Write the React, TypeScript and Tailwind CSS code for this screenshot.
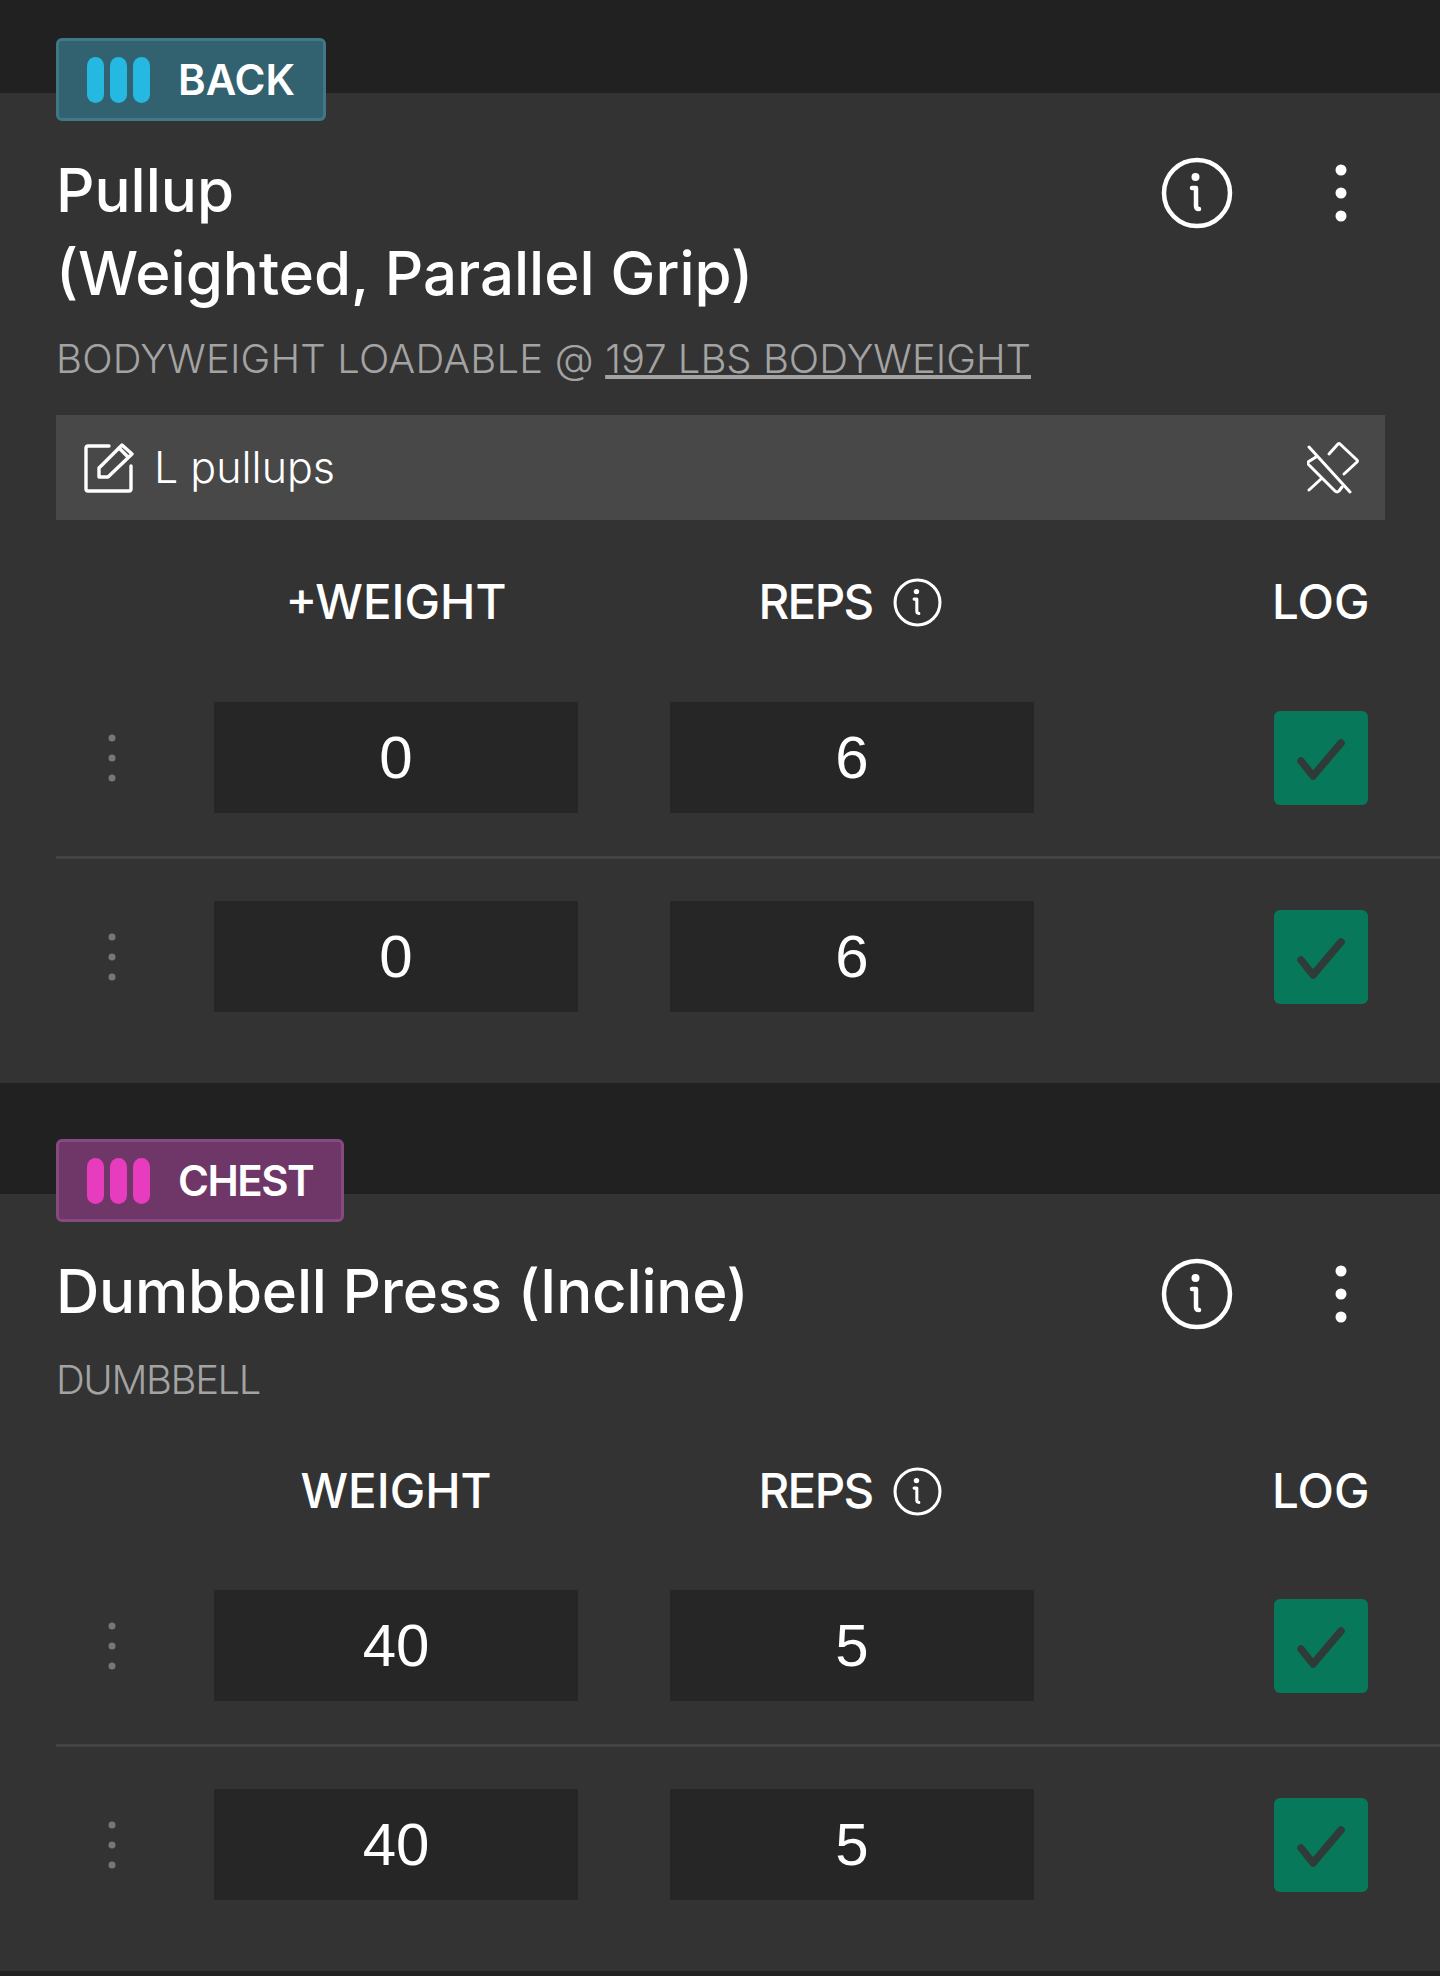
const sans = "font-['Inter','Noto_Sans',sans-serif]";

function InfoIcon({ className }: { className: string }) {
  return (
    <svg viewBox="0 0 72 72" fill="none" stroke="currentColor" className={className}>
      <circle cx="36" cy="36" r="33" strokeWidth="4.5" />
      <circle cx="34.5" cy="20" r="4" fill="currentColor" stroke="none" />
      <path d="M31 31h4v18c0 2 1 3 3 3" strokeWidth="4.5" strokeLinecap="round" strokeLinejoin="round" />
    </svg>
  );
}

function MoreIcon() {
  return (
    <svg viewBox="0 0 12 58" className="h-[58px] w-3 text-white" fill="currentColor">
      <circle cx="6" cy="6" r="5.5" />
      <circle cx="6" cy="29" r="5.5" />
      <circle cx="6" cy="52" r="5.5" />
    </svg>
  );
}

function EditIcon() {
  return (
    <svg viewBox="0 0 50 50" fill="none" stroke="currentColor" strokeWidth="3.4" strokeLinecap="round" strokeLinejoin="round" className="h-[50px] w-[50px] text-white">
      <path d="M25 3H4Q2 3 2 5v41q0 2 2 2h41q2 0 2-2V23" />
      <path d="M15 34V25L38 2l10 9-24 23z" />
      <path d="M35 5l9 9" />
    </svg>
  );
}

function PinOffIcon() {
  return (
    <svg viewBox="0 0 52 52" fill="none" stroke="currentColor" strokeWidth="3" strokeLinecap="round" strokeLinejoin="round" className="h-[52px] w-[52px] text-white">
      <path d="M2 5l41 45" />
      <path d="M22 12l9-10q1-1 2 0l17 16q1 1 0 2L37 32" />
      <path d="M9 15L1 20q-1 1 0 2l27 27q2 2 4 0l3-4" />
      <path d="M14 37L2 48" />
    </svg>
  );
}

function CheckIcon() {
  return (
    <svg viewBox="0 0 94 94" fill="none" stroke="#2f3b38" strokeWidth="7.5" strokeLinecap="round" strokeLinejoin="round" className="h-[94px] w-[94px]">
      <path d="M27 50l12 15 28-33" />
    </svg>
  );
}

function Badge({ label, tone }: { label: string; tone: "back" | "chest" }) {
  const box = tone === "back" ? "border-[#3f7889] bg-[#326270]" : "border-[#874a80] bg-[#6f3767]";
  const bar = tone === "back" ? "bg-[#25b8e0]" : "bg-[#e63cbd]";
  const track = tone === "back" ? "" : "tracking-[-1.5px]";
  return (
    <div className={`relative flex h-[83px] w-fit items-center rounded-md border-[3px] pl-[28px] pr-[28px] ${box}`}>
      <div className="flex gap-1.5">
        <span className={`h-[46px] w-[17px] rounded-full ${bar}`} />
        <span className={`h-[46px] w-[17px] rounded-full ${bar}`} />
        <span className={`h-[46px] w-[17px] rounded-full ${bar}`} />
      </div>
      <span className={`ml-7 text-[42px] font-semibold leading-none text-white ${sans} ${track}`}>{label}</span>
    </div>
  );
}

function SetRow({ left, right }: { left: string; right: string }) {
  return (
    <div className="flex h-[111px] items-center">
      <div className="flex w-[158px] justify-start pl-[52px]">
        <svg viewBox="0 0 8 48" className="h-12 w-2" fill="#777">
          <circle cx="4" cy="4" r="3.5" />
          <circle cx="4" cy="24" r="3.5" />
          <circle cx="4" cy="44" r="3.5" />
        </svg>
      </div>
      <div className="flex h-[111px] w-[364px] items-center justify-center bg-[#262626] font-['Liberation_Sans',sans-serif] text-[60px] text-white">{left}</div>
      <div className="ml-[92px] flex h-[111px] w-[364px] items-center justify-center bg-[#262626] font-['Liberation_Sans',sans-serif] text-[60px] text-white">{right}</div>
      <div className="ml-[240px] h-[94px] w-[94px] rounded-md bg-[#07795a]">
        <CheckIcon />
      </div>
    </div>
  );
}

function Header({ weight }: { weight: string }) {
  return (
    <div className={`flex h-[60px] items-center text-[47.5px] font-medium text-white ${sans}`}>
      <div className="ml-[158px] w-[364px] text-center">{weight}</div>
      <div className="ml-[90px] flex w-[364px] items-center justify-center gap-5">
        <span className="tracking-[-1.6px]">REPS</span>
        <InfoIcon className="h-[49px] w-[49px] text-white" />
      </div>
      <div className="ml-[240px] w-[94px] text-center">LOG</div>
    </div>
  );
}

function CardHead({ lines, sub, titleClass = "" }: { lines: string[]; sub: React.ReactNode; titleClass?: string }) {
  return (
    <>
      <div className="flex items-start justify-between pr-[93px]">
        <h2 className={`text-[60px] font-medium leading-[83px] text-white ${sans} ${titleClass}`}>
          {lines.map((l) => (
            <div key={l}>{l}</div>
          ))}
        </h2>
        <div className="mt-[8px] flex items-center gap-[102px]">
          <InfoIcon className="h-[72px] w-[72px] text-white" />
          <MoreIcon />
        </div>
      </div>
      <div className={`mt-4 text-[40px] font-light leading-[56px] text-[#a3a3a3] ${sans}`}>{sub}</div>
    </>
  );
}

export default function App() {
  return (
    <div className="min-h-[1976px] bg-[#212121]">
      <div className="h-[93px]" />
      <section className="flow-root bg-[#333333] pb-[71px] pl-14">
        <div className="-mt-[55px]">
          <Badge label="BACK" tone="back" />
        </div>
        <div className="mt-[28px]">
          <CardHead
            lines={["Pullup", "(Weighted, Parallel Grip)"]}
            sub={
              <>
                <span className="tracking-[0.18px]">BODYWEIGHT LOADABLE @ </span>
                <span className="underline">197 LBS BODYWEIGHT</span>
              </>
            }
          />
        </div>
        <div className="mt-[28px] mr-[55px] flex h-[105px] items-center justify-between bg-[#484848] pl-7 pr-[26px]">
          <div className={`flex items-center gap-[20px] text-[43px] font-light text-white ${sans}`}>
            <EditIcon />
            L pullups
          </div>
          <PinOffIcon />
        </div>
        <div className="mt-[52px]">
          <Header weight="+WEIGHT" />
        </div>
        <div className="mt-[70px]">
          <SetRow left="0" right="6" />
        </div>
        <div className="mt-[43px] h-[3px] bg-[#444444]" />
        <div className="mt-[42px]">
          <SetRow left="0" right="6" />
        </div>
      </section>
      <div className="h-[111px]" />
      <section className="flow-root bg-[#333333] pb-[71px] pl-14">
        <div className="-mt-[55px]">
          <Badge label="CHEST" tone="chest" />
        </div>
        <div className="mt-[28px]">
          <CardHead
            lines={["Dumbbell Press (Incline)"]}
            titleClass="tracking-[-0.2px]"
            sub={<span className="relative top-[3px] tracking-[-1.4px]">DUMBBELL</span>}
          />
        </div>
        <div className="mt-[56px]">
          <Header weight="WEIGHT" />
        </div>
        <div className="mt-[69px]">
          <SetRow left="40" right="5" />
        </div>
        <div className="mt-[43px] h-[3px] bg-[#444444]" />
        <div className="mt-[42px]">
          <SetRow left="40" right="5" />
        </div>
      </section>
    </div>
  );
}
